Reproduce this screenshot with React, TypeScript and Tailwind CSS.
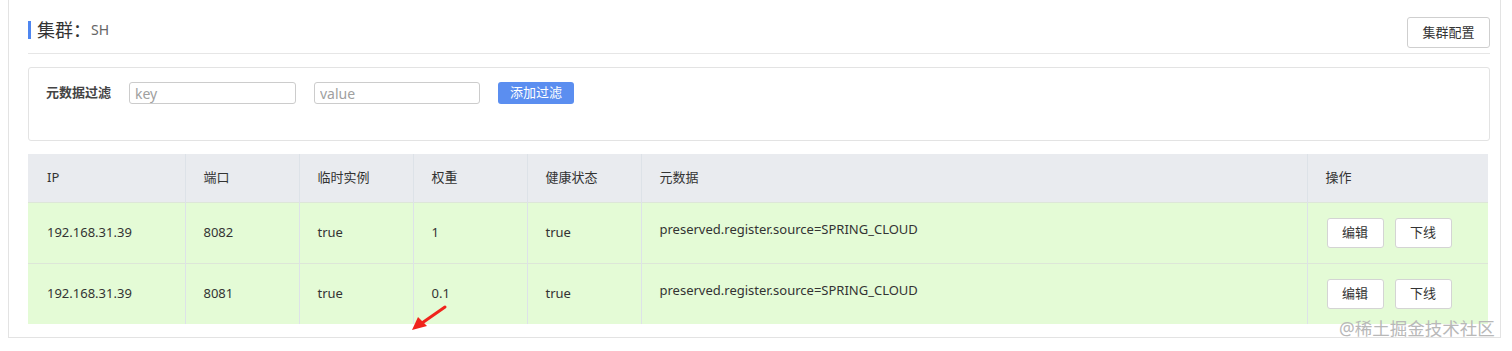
import React from "react";

const font = { fontFamily: '"Noto Sans", "Noto Sans CJK SC", sans-serif' };

const columns = [
  { title: "IP", width: "w-[157px]" },
  { title: "端口", width: "w-[114px]" },
  { title: "临时实例", width: "w-[114px]" },
  { title: "权重", width: "w-[114px]" },
  { title: "健康状态", width: "w-[114px]" },
  { title: "元数据", width: "w-[666px]" },
  { title: "操作", width: "w-[181px]" },
];

const rows = [
  { ip: "192.168.31.39", port: "8082", ephemeral: "true", weight: "1", healthy: "true", meta: "preserved.register.source=SPRING_CLOUD" },
  { ip: "192.168.31.39", port: "8081", ephemeral: "true", weight: "0.1", healthy: "true", meta: "preserved.register.source=SPRING_CLOUD" },
];

function SmallButton({ children }: { children: React.ReactNode }) {
  return (
    <button className="h-[30px] w-[57px] rounded-[3px] border border-[#d4d4d4] bg-white text-[13px] text-[#333]">
      {children}
    </button>
  );
}

export default function App() {
  return (
    <div className="relative h-[351px] w-[1512px] overflow-hidden bg-white text-[#333]" style={font}>
      <div className="ml-[8px] w-[1493px] border-x border-b border-[#e3e3e3] pb-[13px] pl-[19px] pr-[10px]">
        {/* header */}
        <div className="flex items-start justify-between pt-[17px]">
          <div className="mt-[4px] flex items-center">
            <span className="mr-[6px] h-[18px] w-[3px] bg-[#4e86f0]" />
            <span className="text-[18px] leading-[18px] text-[#333]">集群：</span>
            <span className="text-[14px] leading-[18px] text-[#666]">SH</span>
          </div>
          <button className="h-[31px] w-[83px] rounded-[3px] border border-[#cfcfcf] bg-white text-[13px] text-[#333]">
            集群配置
          </button>
        </div>
        <div className="mt-[5px] border-b border-[#e6e6e6]" />

        {/* filter */}
        <div className="mt-[13px] h-[74px] rounded-[3px] border border-[#e3e3e3] pl-[17px] pt-[14px]">
          <div className="flex items-center">
            <span className="w-[83px] text-[13px] font-semibold text-[#444]">元数据过滤</span>
            <input
              placeholder="key"
              className="h-[22px] w-[167px] rounded-[3px] border border-[#cccccc] px-[5px] text-[14px] outline-none placeholder:text-[#a0a0a0]"
            />
            <input
              placeholder="value"
              className="ml-[18px] h-[22px] w-[166px] rounded-[3px] border border-[#cccccc] px-[5px] text-[14px] outline-none placeholder:text-[#a0a0a0]"
            />
            <button className="ml-[18px] h-[22px] w-[76px] rounded-[3px] bg-[#5b8ef0] text-[13px] text-white">
              添加过滤
            </button>
          </div>
        </div>

        {/* table */}
        <table className="mt-[13px] w-[1460px] table-fixed border-collapse text-[13px]">
          <thead>
            <tr className="h-[48px] bg-[#e9ebef]">
              {columns.map((c) => (
                <th
                  key={c.title}
                  className={`${c.width} border-x border-[#dde2e8] px-[18px] text-left font-normal text-[#333] first:border-l-0 first:pl-[19px] last:border-r-0`}
                >
                  {c.title}
                </th>
              ))}
            </tr>
          </thead>
          <tbody>
            {rows.map((r, i) => (
              <tr key={i} className="h-[61px] border-t border-[#dde6d8] bg-[#e4fbd6]">
                <td className="border-r border-[#dde2e8] pl-[19px]">{r.ip}</td>
                <td className="border-r border-[#dde2e8] pl-[18px]">{r.port}</td>
                <td className="border-r border-[#dde2e8] pl-[18px]">{r.ephemeral}</td>
                <td className="border-r border-[#dde2e8] pl-[18px]">{r.weight}</td>
                <td className="border-r border-[#dde2e8] pl-[18px]">{r.healthy}</td>
                <td className="border-r border-[#dde2e8] pl-[18px] pt-[17px] align-top">{r.meta}</td>
                <td className="pl-[19px]">
                  <div className="flex gap-[11px]">
                    <SmallButton>编辑</SmallButton>
                    <SmallButton>下线</SmallButton>
                  </div>
                </td>
              </tr>
            ))}
          </tbody>
        </table>
      </div>

      {/* annotation arrow */}
      <svg className="absolute left-[408px] top-[305px]" width="40" height="28" viewBox="0 0 40 28">
        <path d="M37 2 L14 18" stroke="#f0241c" strokeWidth="3" strokeLinecap="round" />
        <path d="M4 25 L10 12 L19 21 Z" fill="#f0241c" />
      </svg>

      {/* watermark */}
      <div className="absolute left-[1339px] top-[315px] text-[17.5px] text-[#b8b8b8]">@稀土掘金技术社区</div>
    </div>
  );
}
